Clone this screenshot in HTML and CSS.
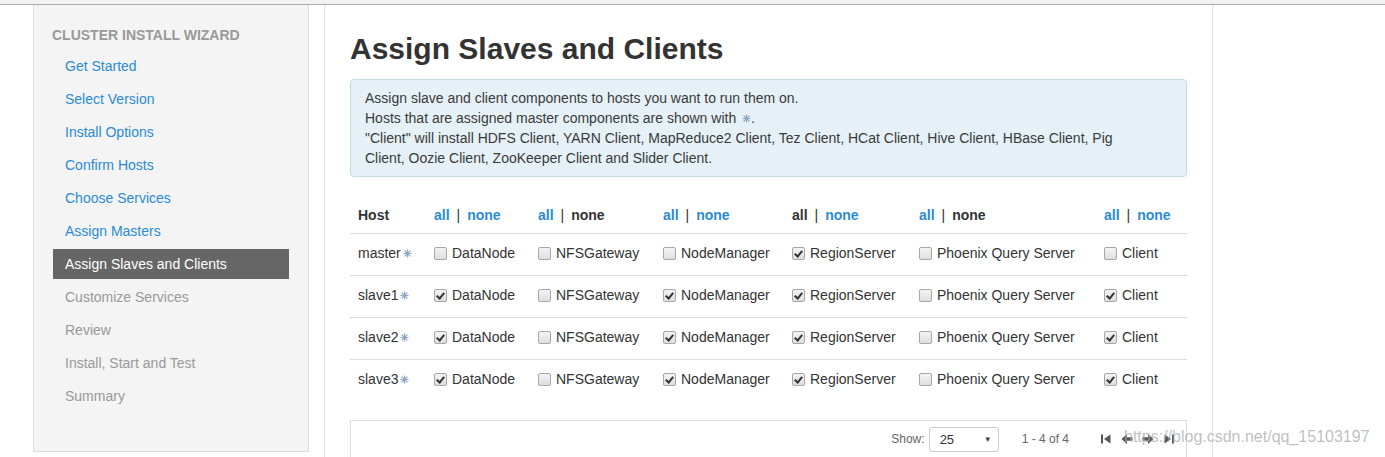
FILE: index.html
```html
<!DOCTYPE html>
<html lang="en">
<head>
    <meta charset="UTF-8">
    <title>Assign Slaves and Clients</title>
    <link rel="stylesheet" href="styles.css">
</head>
<body>
    <div class="topbar"></div>

    <div class="wrap">
        <!-- wizard steps -->
        <div class="sidebar">
            <div class="nav-header">Cluster Install Wizard</div>
            <ul class="nav">
                <li><a class="done">Get Started</a></li>
                <li><a class="done">Select Version</a></li>
                <li><a class="done">Install Options</a></li>
                <li><a class="done">Confirm Hosts</a></li>
                <li><a class="done">Choose Services</a></li>
                <li><a class="done">Assign Masters</a></li>
                <li><a class="active">Assign Slaves and Clients</a></li>
                <li><a class="todo">Customize Services</a></li>
                <li><a class="todo">Review</a></li>
                <li><a class="todo">Install, Start and Test</a></li>
                <li><a class="todo">Summary</a></li>
            </ul>
        </div>

        <!-- main panel -->
        <div class="main">
            <h1 class="title">Assign Slaves and Clients</h1>
            <div class="alert">
                Assign slave and client components to hosts you want to run them on.<br>
                Hosts that are assigned master components are shown with <svg class="star" viewBox="0 0 10 10"><g stroke="currentColor" stroke-width="1.3" stroke-linecap="round"><line x1="5" y1="1" x2="5" y2="9"/><line x1="1" y1="5" x2="9" y2="5"/><line x1="2.2" y1="2.2" x2="7.8" y2="7.8"/><line x1="7.8" y1="2.2" x2="2.2" y2="7.8"/></g></svg>.<br>
                "Client" will install HDFS Client, YARN Client, MapReduce2 Client, Tez Client, HCat Client, Hive Client, HBase Client, Pig Client, Oozie Client, ZooKeeper Client and Slider Client.
            </div>

            <table class="hosts">
                <colgroup>
                    <col style="width: 76px">
                    <col style="width: 104px">
                    <col style="width: 125px">
                    <col style="width: 129px">
                    <col style="width: 127px">
                    <col style="width: 185px">
                    <col style="width: 91px">
                </colgroup>
                <thead>
                    <tr>
                        <th>Host</th>
                        <th><a class="lnk">all</a><span class="sep">|</span><a class="lnk">none</a></th>
                        <th><a class="lnk">all</a><span class="sep">|</span><span>none</span></th>
                        <th><a class="lnk">all</a><span class="sep">|</span><a class="lnk">none</a></th>
                        <th><span>all</span><span class="sep">|</span><a class="lnk">none</a></th>
                        <th><a class="lnk">all</a><span class="sep">|</span><span>none</span></th>
                        <th><a class="lnk">all</a><span class="sep">|</span><a class="lnk">none</a></th>
                    </tr>
                </thead>
                <tbody id="rows"></tbody>
            </table>

            <div class="pager">
                <span class="muted">Show:</span>
                <div class="select"><span>25</span><span class="caret">&#9660;</span></div>
                <span class="muted range">1 - 4 of 4</span>
                <div class="arrows">
                    <svg viewBox="0 0 12 12"><rect x="1" y="1.5" width="2" height="9"/><path d="M10.5 1.5 L4 6 L10.5 10.5 Z"/></svg>
                    <svg viewBox="0 0 12 12"><path d="M0.5 6 L6 1 L6 4.3 L11.5 4.3 L11.5 7.7 L6 7.7 L6 11 Z"/></svg>
                    <svg viewBox="0 0 12 12"><path d="M11.5 6 L6 1 L6 4.3 L0.5 4.3 L0.5 7.7 L6 7.7 L6 11 Z"/></svg>
                    <svg viewBox="0 0 12 12"><path d="M1.5 1.5 L8 6 L1.5 10.5 Z"/><rect x="9" y="1.5" width="2" height="9"/></svg>
                </div>
            </div>
        </div>
    </div>

    <div class="watermark">https://blog.csdn.net/qq_15103197</div>

    <script>
        // 每台主机勾选的组件
        const components = ['DataNode', 'NFSGateway', 'NodeManager', 'RegionServer', 'Phoenix Query Server', 'Client'];
        const hosts = [
            { name: 'master', on: [0, 0, 0, 1, 0, 0] },
            { name: 'slave1', on: [1, 0, 1, 1, 0, 1] },
            { name: 'slave2', on: [1, 0, 1, 1, 0, 1] },
            { name: 'slave3', on: [1, 0, 1, 1, 0, 1] }
        ];
        const star = '<svg class="star" viewBox="0 0 10 10"><g stroke="currentColor" stroke-width="1.3" stroke-linecap="round"><line x1="5" y1="1" x2="5" y2="9"/><line x1="1" y1="5" x2="9" y2="5"/><line x1="2.2" y1="2.2" x2="7.8" y2="7.8"/><line x1="7.8" y1="2.2" x2="2.2" y2="7.8"/></g></svg>';
        const rows = document.getElementById('rows');

        hosts.forEach(host => {
            let html = `<td><div class="cell">${host.name}${star}</div></td>`;
            components.forEach((c, i) => {
                const cls = host.on[i] ? 'cb on' : 'cb';
                html += `<td><label class="cell"><span class="${cls}"></span>${c}</label></td>`;
            });
            const tr = document.createElement('tr');
            tr.innerHTML = html;
            rows.appendChild(tr);
        });
    </script>
</body>
</html>
```

FILE: styles.css
```css
body {
    margin: 0;
    font-family: "Liberation Sans", Arial, sans-serif;
    font-size: 14px;
    color: #333;
    background: #fff;
}

.topbar {
    height: 4px;
    background-color: #f2f2f2;
    border-bottom: 1px solid #a9a9a9;
}

.wrap {
    display: flex;
    align-items: flex-start;
    padding-left: 33px;
    gap: 15px;
}

/* 左侧向导 */
.sidebar {
    width: 276px;
    height: 447px;
    background-color: #f4f4f4;
    border: 1px solid #dddddd;
    border-top: none;
    padding-top: 20px;
    box-sizing: border-box;
}

.nav-header {
    padding-left: 18px;
    line-height: 20px;
    font-weight: bold;
    text-transform: uppercase;
    color: #999;
    margin-bottom: 6px;
}

.nav {
    list-style: none;
    margin: 0 19px;
    padding: 0;
}

.nav li {
    margin-bottom: 3px;
}

.nav a {
    display: block;
    height: 30px;
    line-height: 30px;
    padding-left: 12px;
}

.nav .done {
    color: #2a8bd6;
}

.nav .todo {
    color: #999;
}

.nav .active {
    background-color: #666;
    color: #fff;
}

/* 主内容 */
.main {
    width: 837px;
    min-height: 452px;
    padding: 0 25px;
    border-left: 1px solid #e3e3e3;
    border-right: 1px solid #e3e3e3;
}

.title {
    font-size: 30px;
    line-height: 33px;
    margin: 27px 0 14px;
    color: #333;
}

.alert {
    background-color: #e5f1f6;
    border: 1px solid #c6dce5;
    border-radius: 4px;
    padding: 8px 35px 8px 14px;
    line-height: 20px;
    color: #3a3a3a;
    margin-bottom: 20px;
}

.star {
    width: 9px;
    height: 9px;
    color: #8ea8c2;
    margin-left: 2px;
}

.hosts {
    width: 837px;
    table-layout: fixed;
    border-collapse: collapse;
}

.hosts th {
    text-align: left;
    padding: 8px 0 8px 8px;
    line-height: 20px;
    font-weight: bold;
    border-bottom: 1px solid #dddddd;
    white-space: nowrap;
}

.hosts td {
    padding: 9px 0 12px 8px;
    white-space: nowrap;
}

.hosts tbody tr + tr td {
    border-top: 1px solid #dddddd;
}

.cell {
    display: flex;
    align-items: center;
    height: 20px;
    line-height: 20px;
}

.lnk {
    color: #2a8bd6;
}

.sep {
    margin: 0 7px;
    font-weight: normal;
}

.cb {
    position: relative;
    width: 11px;
    height: 11px;
    border: 1px solid #a7a7a7;
    border-radius: 2px;
    background: linear-gradient(#f4f4f4, #dedede);
    margin-right: 5px;
    flex: none;
}

.cb.on::after {
    content: "";
    position: absolute;
    left: 3px;
    top: 1px;
    width: 3px;
    height: 6px;
    border-right: 2px solid #333;
    border-bottom: 2px solid #333;
    transform: rotate(40deg);
}

/* 分页 */
.pager {
    margin-top: 19px;
    border: 1px solid #dddddd;
    border-bottom: none;
    height: 40px;
    padding: 6px 11px 0 0;
    display: flex;
    justify-content: flex-end;
    align-items: flex-start;
    font-size: 12px;
}

.muted {
    color: #666;
    line-height: 25px;
}

.select {
    width: 52px;
    height: 23px;
    border: 1px solid #cccccc;
    border-radius: 3px;
    margin-left: 4px;
    display: flex;
    justify-content: space-between;
    align-items: center;
    padding: 0 6px 0 10px;
    font-size: 13px;
    color: #333;
}

.caret {
    font-size: 8px;
    color: #444;
}

.range {
    margin-left: 23px;
}

.arrows {
    display: flex;
    gap: 9px;
    margin-left: 31px;
    padding-top: 6px;
}

.arrows svg {
    width: 12px;
    height: 12px;
    fill: #555;
}

.watermark {
    position: absolute;
    left: 1124px;
    top: 428px;
    font-size: 16px;
    color: rgba(170, 170, 170, 0.75);
}
```
